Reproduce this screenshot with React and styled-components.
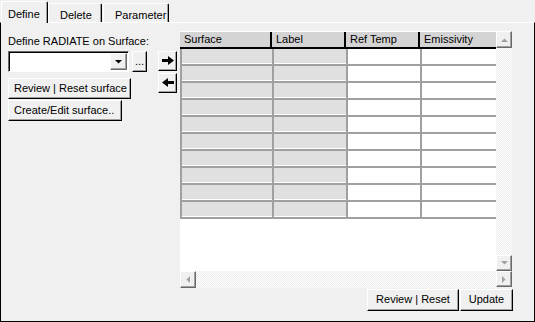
import React from 'react';
import styled, { createGlobalStyle } from 'styled-components';

const Global = createGlobalStyle`
  html, body { margin: 0; padding: 0; background: #f0f0f0; }
  body { font-family: "Liberation Sans", Arial, sans-serif; font-size: 11px; color: #000; }
  * { box-sizing: border-box; }
`;

const Window = styled.div`
  width: 535px;
  height: 322px;
  display: flex;
  flex-direction: column;
  background: #f0f0f0;
  overflow: hidden;
`;

const TabStrip = styled.div`
  display: flex;
  align-items: flex-end;
  height: 22px;
  padding-left: 1px;
  position: relative;
  z-index: 1;
`;

const Tab = styled.div`
  width: ${p => p.$w}px;
  height: ${p => (p.$active ? 22 : 19)}px;
  margin-left: ${p => p.$ml || 0}px;
  margin-bottom: ${p => (p.$active ? -1 : 0)}px;
  padding: ${p => (p.$active ? '6px 0 0 6px' : '5px 0 0 11px')};
  background: #f0f0f0;
  border-top: 1px solid #fff;
  border-left: 1px solid #fff;
  border-right: 1px solid #000;
  box-shadow: inset -1px 0 #a0a0a0;
  border-top-right-radius: 2px;
  line-height: 13px;
  white-space: nowrap;
`;

const Panel = styled.div`
  flex: 1;
  display: flex;
  flex-direction: column;
  border-top: 1px solid #fff;
  border-left: 1px solid #000;
  border-right: 1px solid #000;
  border-bottom: 1px solid #000;
  padding: 8px 21px 0 7px;
`;

const MainRow = styled.div`
  display: flex;
  align-items: flex-start;
`;

const LeftCol = styled.div`
  width: 150px;
  padding-top: 4px;
  display: flex;
  flex-direction: column;
  align-items: flex-start;
`;

const Label = styled.div`
  line-height: 13px;
  white-space: nowrap;
`;

const ComboRow = styled.div`
  display: flex;
  gap: 3px;
  margin-top: 3px;
`;

const Combo = styled.div`
  width: 121px;
  height: 21px;
  background: #fff;
  border-top: 1px solid #696969;
  border-left: 1px solid #696969;
  border-right: 1px solid #fff;
  border-bottom: 1px solid #fff;
  box-shadow: inset 1px 1px #000;
  display: flex;
  justify-content: flex-end;
  padding: 1px 1px 1px 0;
`;

const Btn = styled.div`
  width: ${p => p.$w}px;
  height: ${p => p.$h || 21}px;
  margin-top: ${p => p.$mt || 0}px;
  background: #f0f0f0;
  border-top: 1px solid #fff;
  border-left: 1px solid #fff;
  border-right: 1px solid #000;
  border-bottom: 1px solid #000;
  box-shadow: inset -1px -1px #a0a0a0;
  display: flex;
  align-items: center;
  justify-content: ${p => (p.$left ? 'flex-start' : 'center')};
  padding: ${p => (p.$left ? '0 0 1px 5px' : '0 0 1px 0')};
  line-height: 13px;
  white-space: nowrap;
  flex-shrink: 0;
`;

const ArrowCol = styled.div`
  display: flex;
  flex-direction: column;
  gap: 2px;
  margin-top: 20px;
  margin-right: 3px;
`;

const Grid = styled.div`
  width: 332px;
  height: 257px;
  display: flex;
  flex-direction: column;
`;

const GridTop = styled.div`
  display: flex;
  height: 240px;
`;

const DataArea = styled.div`
  width: 316px;
  background: #fff;
  display: flex;
  flex-direction: column;
`;

const HeaderRow = styled.div`
  display: flex;
  height: 18px;
  background: #d4d4d4;
  border-top: 1px solid #fff;
  border-bottom: 2px solid #000;
`;

const HeaderCell = styled.div`
  width: ${p => p.$w}px;
  border-right: 2px solid #000;
  padding-left: 4px;
  line-height: 14px;
  white-space: nowrap;
  &:last-child { border-right: 0; }
`;

const Row = styled.div`
  display: flex;
  height: 17px;
`;

const Cell = styled.div`
  width: ${p => p.$w}px;
  background: ${p => (p.$gray ? '#e0e0e0' : '#fff')};
  border-left: 2px solid #a0a0a0;
  border-bottom: 2px solid #a0a0a0;
  box-shadow: inset 0 -1px #fff;
`;

const track = `
  background-color: #fff;
  background-image: repeating-conic-gradient(#ebebeb 0 25%, #fff 0 50%);
  background-size: 2px 2px;
`;

const VScroll = styled.div`
  width: 16px;
  display: flex;
  flex-direction: column;
`;

const Track = styled.div`
  flex: 1;
  ${track}
`;

const HScroll = styled.div`
  height: 17px;
  display: flex;
`;

const SBtn = styled.div`
  width: ${p => p.$w || 16}px;
  height: ${p => p.$h || 16}px;
  background: #f0f0f0;
  border-top: 1px solid #fff;
  border-left: 1px solid #fff;
  border-right: 1px solid #696969;
  border-bottom: 1px solid #696969;
  box-shadow: inset -1px -1px #a0a0a0;
  display: flex;
  align-items: center;
  justify-content: center;
  flex-shrink: 0;
`;

const BottomRow = styled.div`
  display: flex;
  justify-content: flex-end;
  gap: 1px;
  margin-top: 1px;
`;

const Tri = ({ dir, color = '#a0a0a0' }) => {
  const pts = {
    up: '0,4 7,4 3.5,0.5',
    down: '0,0 7,0 3.5,3.5',
    left: '4,0 4,7 0.5,3.5',
    right: '0,0 0,7 3.5,3.5',
  }[dir];
  const vertical = dir === 'up' || dir === 'down';
  return (
    <svg width={vertical ? 7 : 4} height={vertical ? 4 : 7} viewBox={vertical ? '0 0 7 4' : '0 0 4 7'}>
      <polygon points={pts} fill={color} />
    </svg>
  );
};

const BigArrow = ({ left }) => (
  <svg width="12" height="9" viewBox="0 0 12 9" style={left ? { transform: 'scaleX(-1)' } : undefined}>
    <rect x="0" y="3" width="7" height="3" fill="#000" />
    <polygon points="6,0 12,4.5 6,9" fill="#000" />
  </svg>
);

const cols = [
  { name: 'Surface', w: 92, gray: true },
  { name: 'Label', w: 74, gray: true },
  { name: 'Ref Temp', w: 74 },
  { name: 'Emissivity', w: 76 },
];

export default function App() {
  return (
    <>
      <Global />
      <Window>
        <TabStrip>
          <Tab $w={47} $active>Define</Tab>
          <Tab $w={54}>Delete</Tab>
          <Tab $w={66} $ml={1}>Parameter</Tab>
        </TabStrip>
        <Panel>
          <MainRow>
            <LeftCol>
              <Label>Define RADIATE on Surface:</Label>
              <ComboRow>
                <Combo>
                  <SBtn $w={17} $h={17}>
                    <Tri dir="down" color="#000" />
                  </SBtn>
                </Combo>
                <Btn $w={15} $h={21}>...</Btn>
              </ComboRow>
              <Btn $w={123} $mt={6} $left>Review | Reset surface</Btn>
              <Btn $w={114} $mt={1} $left>Create/Edit surface..</Btn>
            </LeftCol>
            <ArrowCol>
              <Btn $w={19} $h={20}><BigArrow /></Btn>
              <Btn $w={19} $h={20}><BigArrow left /></Btn>
            </ArrowCol>
            <Grid>
              <GridTop>
                <DataArea>
                  <HeaderRow>
                    {cols.map(c => (
                      <HeaderCell key={c.name} $w={c.w}>{c.name}</HeaderCell>
                    ))}
                  </HeaderRow>
                  {Array.from({ length: 10 }).map((_, r) => (
                    <Row key={r}>
                      {cols.map(c => (
                        <Cell key={c.name} $w={c.w} $gray={c.gray} />
                      ))}
                    </Row>
                  ))}
                </DataArea>
                <VScroll>
                  <SBtn $h={17}><Tri dir="up" /></SBtn>
                  <Track />
                  <SBtn $h={16}><Tri dir="down" /></SBtn>
                </VScroll>
              </GridTop>
              <HScroll>
                <SBtn $h={17}><Tri dir="left" /></SBtn>
                <Track />
                <SBtn $h={16}><Tri dir="right" /></SBtn>
              </HScroll>
            </Grid>
          </MainRow>
          <BottomRow>
            <Btn $w={92} $h={22}>Review | Reset</Btn>
            <Btn $w={53} $h={22}>Update</Btn>
          </BottomRow>
        </Panel>
      </Window>
    </>
  );
}
